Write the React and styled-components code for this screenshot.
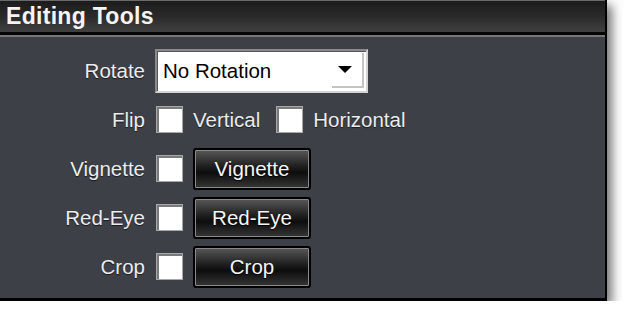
import React from 'react';
import styled, { createGlobalStyle } from 'styled-components';

const GlobalStyle = createGlobalStyle`
  html, body {
    margin: 0;
    padding: 0;
    background: #fff;
  }
  body {
    font-family: "Liberation Sans", Arial, sans-serif;
  }
`;

const Panel = styled.div`
  width: 605px;
  height: 298px;
  display: flex;
  flex-direction: column;
  background: #3d4047;
  border-right: 2px solid #000;
  border-bottom: 3px solid #000;
  box-shadow: 5px 5px 10px rgba(0, 0, 0, 0.55);
`;

const Header = styled.div`
  height: 31px;
  display: flex;
  align-items: center;
  padding-left: 6px;
  border-top: 1px solid #6a6a6a;
  border-bottom: 3px solid #050505;
  box-shadow: 0 2px 0 #767676;
  background: linear-gradient(#1c1c1c, #2a2a2a 50%, #404040);
  color: #f4f4f4;
  font-size: 23px;
  font-weight: bold;
  letter-spacing: 0.3px;
`;

const Form = styled.div`
  display: grid;
  grid-template-columns: 145px 1fr;
  grid-auto-rows: 49px;
  column-gap: 10px;
  align-items: center;
  padding-top: 11px;
`;

const Label = styled.span`
  justify-self: end;
  color: #ececec;
  font-size: 20.5px;
  text-shadow: 0 1px 1px rgba(0, 0, 0, 0.6);
`;

const Controls = styled.div`
  display: flex;
  align-items: center;
  gap: ${p => p.gap || 10}px;
  padding-top: ${p => p.shift || 0}px;
`;

const SelectBox = styled.div`
  width: 209px;
  height: 40px;
  display: flex;
  align-items: stretch;
  background: #fff;
  border: 2px solid;
  border-color: #8a8a8a #d4d4d4 #d4d4d4 #8a8a8a;
  box-shadow: inset 1px 1px 0 #555;
`;

const SelectText = styled.span`
  flex: 1;
  display: flex;
  align-items: center;
  padding-left: 6px;
  color: #000;
  font-size: 20.5px;
`;

const ArrowArea = styled.span`
  width: 30px;
  margin: 2px 2px 3px 0;
  display: flex;
  align-items: center;
  justify-content: center;
  border-right: 2px solid #c4c4c4;
  border-bottom: 2px solid #c4c4c4;
`;

const Arrow = styled.span`
  width: 0;
  height: 0;
  margin-right: 4px;
  border-left: 7px solid transparent;
  border-right: 7px solid transparent;
  border-top: 7px solid #000;
`;

const Check = styled.span`
  width: 25px;
  height: 25px;
  background: #fff;
  border: 1px solid #a8a8a8;
  box-shadow: inset 2px 2px 0 #7a7a7a;
  margin-left: 1px;
`;

const Option = styled.span`
  color: #ececec;
  font-size: 20.5px;
  text-shadow: 0 1px 1px rgba(0, 0, 0, 0.6);
  margin-right: ${p => p.after || 0}px;
`;

const Button = styled.button`
  width: 114px;
  height: 38px;
  margin-left: 1px;
  padding: 0;
  border: 1px solid #8a8a8a;
  outline: 2px solid #000;
  border-radius: 1px;
  background: linear-gradient(#555, #222 40%, #0d0d0d 60%, #333);
  color: #f6f6f6;
  font-family: "Liberation Sans", Arial, sans-serif;
  font-size: 20.5px;
  text-shadow: 0 1px 1px #000;
`;

const tools = ['Vignette', 'Red-Eye', 'Crop'];

export default function App() {
  return (
    <>
      <GlobalStyle />
      <Panel>
        <Header>Editing Tools</Header>
        <Form>
          <Label>Rotate</Label>
          <Controls>
            <SelectBox>
              <SelectText>No Rotation</SelectText>
              <ArrowArea>
                <Arrow />
              </ArrowArea>
            </SelectBox>
          </Controls>

          <Label>Flip</Label>
          <Controls>
            <Check />
            <Option after={5}>Vertical</Option>
            <Check />
            <Option>Horizontal</Option>
          </Controls>

          {tools.map(t => (
            <React.Fragment key={t}>
              <Label>{t}</Label>
              <Controls gap={11}>
                <Check />
                <Button>{t}</Button>
              </Controls>
            </React.Fragment>
          ))}
        </Form>
      </Panel>
    </>
  );
}
